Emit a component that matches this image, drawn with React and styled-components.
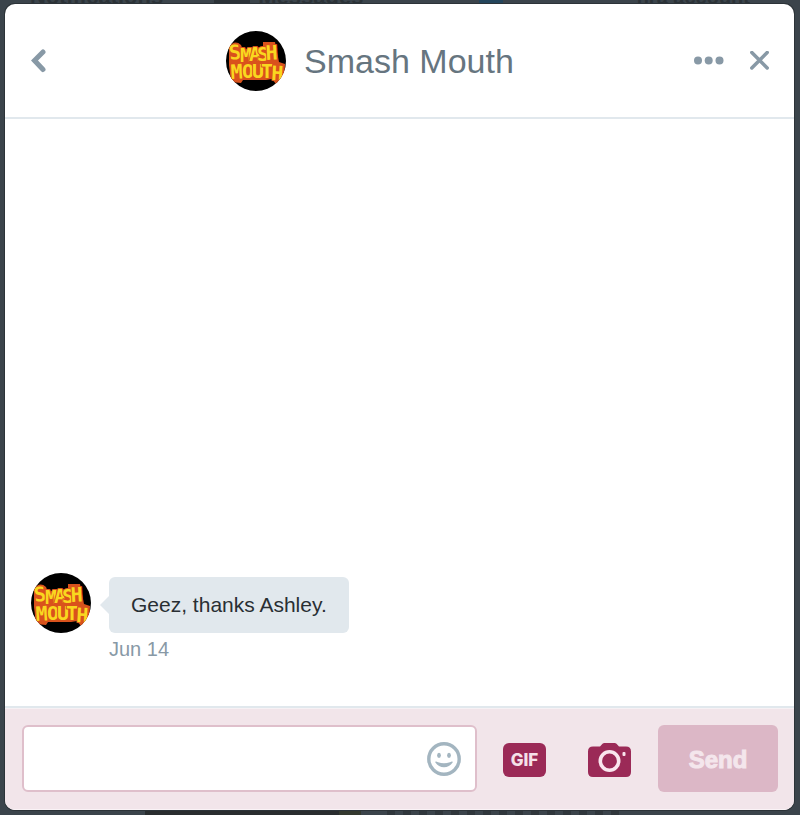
import React, { useState } from 'react'
import styled, { createGlobalStyle } from 'styled-components'

const GlobalStyle = createGlobalStyle`
    * {
        box-sizing: border-box;
    }
    body {
        margin: 0;
        background: #3b444b;
        font-family: "Liberation Sans", Arial, sans-serif;
    }
`
const Page = styled.div`
    position: relative;
    display: flex;
    min-height: 100vh;
    padding: 4px 6px 5px 5px;
    overflow: hidden;
`
const Behind = styled.div`
    position: absolute;
    inset: 0;
    display: flex;
    flex-direction: column;
    justify-content: space-between;
    color: #2b3237;
    font-size: 22px;
    font-weight: bold;
    line-height: 22px;
`
const BehindNav = styled.div`
    display: flex;
    gap: 8px;
    margin-top: -14px;
    padding: 0 50px 0 30px;

    span:last-child {
        margin-left: auto;
        font-size: 20px;
    }
`
const NavBlock = styled.i`
    width: ${props => props.width}px;
    margin-left: ${props => props.before}px;
    background: ${props => props.color};
`
const BehindMedia = styled.div`
    display: flex;
    gap: 26px;
    height: 6px;
    padding-left: 145px;
`
const Photo = styled.div`
    width: 216px;
    background: linear-gradient(90deg, #292d2f 90%, #34392f 90%);
`
const Pattern = styled.div`
    width: 240px;
    background: repeating-linear-gradient(90deg, #30373c 0 8px, #3b444b 8px 16px);
`
const Dialog = styled.section`
    position: relative;
    flex: 1;
    display: flex;
    flex-direction: column;
    border-radius: 10px;
    background: #fff;
    box-shadow: 0 0 0 1px #2c3338;
    overflow: hidden;
`
const Header = styled.header`
    display: flex;
    align-items: center;
    padding: 27px 24px 26px 26px;
    border-bottom: 2px solid #e1e8ed;
`
const IconButton = styled.button`
    display: flex;
    padding: 0;
    border: 0;
    background: none;
    color: ${props => props.color || '#8899a6'};
    cursor: pointer;
`
const Heading = styled.div`
    flex: 1;
    display: flex;
    align-items: center;
    justify-content: center;
    gap: 18px;
`
const Title = styled.h1`
    margin: 0;
    color: #66757f;
    font-size: 34px;
    font-weight: 300;
    line-height: 40px;
`
const Actions = styled.div`
    display: flex;
    align-items: center;
    gap: 26px;
`
const Logo = styled.svg`
    flex: none;
    width: 60px;
    height: 60px;
    border-radius: 50%;
    background: #000;
`
const Conversation = styled.main`
    flex: 1;
    display: flex;
    flex-direction: column;
    justify-content: flex-end;
    padding: 26px 26px 45px;
`
const Message = styled.article`
    display: flex;
    align-items: flex-start;
    gap: 18px;
`
const MessageBody = styled.div`
    padding-top: 4px;
`
const Bubble = styled.p`
    position: relative;
    margin: 0;
    padding: 16px 22px;
    border-radius: 6px;
    background: #e1e8ed;
    color: #292f33;
    font-size: 21px;
    line-height: 24px;

    &::before {
        content: '';
        position: absolute;
        top: 50%;
        right: 100%;
        margin-top: -9px;
        border: solid transparent;
        border-width: 9px 9px 9px 0;
        border-right-color: #e1e8ed;
    }
`
const Time = styled.time`
    display: block;
    margin-top: 4px;
    color: #8899a6;
    font-size: 20px;
    line-height: 24px;
`
const Composer = styled.form`
    display: flex;
    align-items: center;
    padding: 17px 16px 18px 17px;
    border-top: 2px solid #e1e8ed;
    background: #f2e5ea;
    box-shadow: inset 0 1px #f6f1f4, inset 0 -1px #faf3f6;
`
const Field = styled.div`
    flex: 1;
    display: flex;
    align-items: center;
    height: 67px;
    padding-right: 14px;
    border: 2px solid #dfbfcb;
    border-radius: 6px;
    background: #fff;
`
const Input = styled.input`
    flex: 1;
    min-width: 0;
    height: 100%;
    padding: 0 16px;
    border: 0;
    outline: 0;
    background: none;
    color: #292f33;
    font: inherit;
    font-size: 21px;
`
const Tools = styled.div`
    display: flex;
    gap: 42px;
    padding: 2px 27px 0 26px;
`
const GifButton = styled.button`
    width: 43px;
    height: 34px;
    padding: 0;
    border: 0;
    border-radius: 6px;
    background: #9b2a57;
    color: #f5e1e9;
    font-family: Inter, sans-serif;
    font-size: 17px;
    font-weight: 800;
    line-height: 34px;
`
const SendButton = styled.button`
    width: 120px;
    height: 67px;
    padding: 2px 0 0;
    border: 0;
    border-radius: 6px;
    background: #dcb7c6;
    color: #f4e6ec;
    font-family: "Liberation Sans", sans-serif;
    font-size: 24px;
    font-weight: bold;
    -webkit-text-stroke: 1px #f4e6ec;
`

const Avatar = () => (
    <Logo viewBox="0 0 60 60" role="img" aria-label="Smash Mouth">
        <path
            d="M3 17Q8 8 15 14L17 19 25 17 37 16 37 11 49 11 53 31 59 33 58 50 50 53 46 48 40 49 30 49 17 49 15 52 5 51 3 34Z"
            fill="#d9521c"
        />
        <g
            fill="#f9d71f"
            stroke="#d9521c"
            strokeWidth="2"
            strokeLinejoin="round"
            paintOrder="stroke"
            fontFamily="DejaVu Sans Mono, monospace"
            fontWeight="bold"
        >
            <text x="4 14 23 31 40" y="29 31 30 30 29" rotate="-8 0 0 0 -3" fontSize="20">SMASH</text>
            <text x="5 16 26 35 45" y="48 47 47 47 49" rotate="-3 0 0 0 3" fontSize="20">MOUTH</text>
        </g>
    </Logo>
)

export default function App() {
    const [text, setText] = useState('')
    return (
        <Page>
            <GlobalStyle />
            <Behind aria-hidden="true">
                <BehindNav>
                    <span>Notifications</span>
                    <NavBlock width={36} before={43} color="#2b3237" />
                    <span>Messages</span>
                    <NavBlock width={24} before={108} color="#24455c" />
                    <span>hra account</span>
                </BehindNav>
                <BehindMedia>
                    <Photo />
                    <Pattern />
                </BehindMedia>
            </Behind>
            <Dialog role="dialog" aria-label="Smash Mouth">
                <Header>
                    <IconButton type="button" aria-label="Back">
                        <svg width="15" height="24" viewBox="0 0 15 24" fill="none" stroke="currentColor" strokeWidth="5" strokeLinecap="round">
                            <path d="M12 3 3.500 11.500 12 20.500" />
                        </svg>
                    </IconButton>
                    <Heading>
                        <Avatar />
                        <Title>Smash Mouth</Title>
                    </Heading>
                    <Actions>
                        <IconButton type="button" aria-label="More">
                            <svg width="30" height="20" viewBox="0 0 30 20" fill="currentColor">
                                <circle cx="4" cy="9.500" r="4" />
                                <circle cx="14.700" cy="9.500" r="4" />
                                <circle cx="25.500" cy="9.500" r="4" />
                            </svg>
                        </IconButton>
                        <IconButton type="button" aria-label="Close">
                            <svg width="20" height="20" viewBox="0 0 20 20" fill="none" stroke="currentColor" strokeWidth="3.500" strokeLinecap="round">
                                <path d="M1.800 1.500l15.400 15.400M17.200 1.500 1.800 16.900" />
                            </svg>
                        </IconButton>
                    </Actions>
                </Header>
                <Conversation>
                    <Message>
                        <Avatar />
                        <MessageBody>
                            <Bubble>Geez, thanks Ashley.</Bubble>
                            <Time>Jun 14</Time>
                        </MessageBody>
                    </Message>
                </Conversation>
                <Composer onSubmit={e => e.preventDefault()}>
                    <Field>
                        <Input aria-label="Message" value={text} onChange={e => setText(e.target.value)} />
                        <IconButton type="button" aria-label="Add emoji" color="#a3b5c0">
                            <svg width="34" height="34" viewBox="0 0 34 34" fill="currentColor">
                                <circle cx="17" cy="17" r="15.200" fill="none" stroke="currentColor" strokeWidth="3.400" />
                                <ellipse cx="12" cy="13.300" rx="1.900" ry="2.600" />
                                <ellipse cx="22" cy="13.300" rx="1.900" ry="2.600" />
                                <path d="M9.200 19.500c5 2.400 10.600 2.400 15.600 0 .8-.3 1.200.3.800 1-3.600 6.300-13.600 6.300-17.200 0-.4-.7 0-1.300.8-1z" />
                            </svg>
                        </IconButton>
                    </Field>
                    <Tools>
                        <GifButton type="button">GIF</GifButton>
                        <IconButton type="button" aria-label="Add photo" color="#9b2a57">
                            <svg width="43" height="34" viewBox="0 0 43 34" fill="currentColor">
                                <path d="M5 3.500h7L14.500.8Q15.200 0 16.500 0h10q1.300 0 2 .8L31 3.500h7q5 0 5 5V29q0 5-5 5H5q-5 0-5-5V8.500q0-5 5-5z" />
                                <circle cx="21.500" cy="18" r="9.200" fill="none" stroke="#fae6ee" strokeWidth="3.600" />
                                <rect x="34.500" y="9" width="3" height="4" rx="1" fill="#fae6ee" />
                            </svg>
                        </IconButton>
                    </Tools>
                    <SendButton type="submit" disabled={!text}>Send</SendButton>
                </Composer>
            </Dialog>
        </Page>
    )
}
